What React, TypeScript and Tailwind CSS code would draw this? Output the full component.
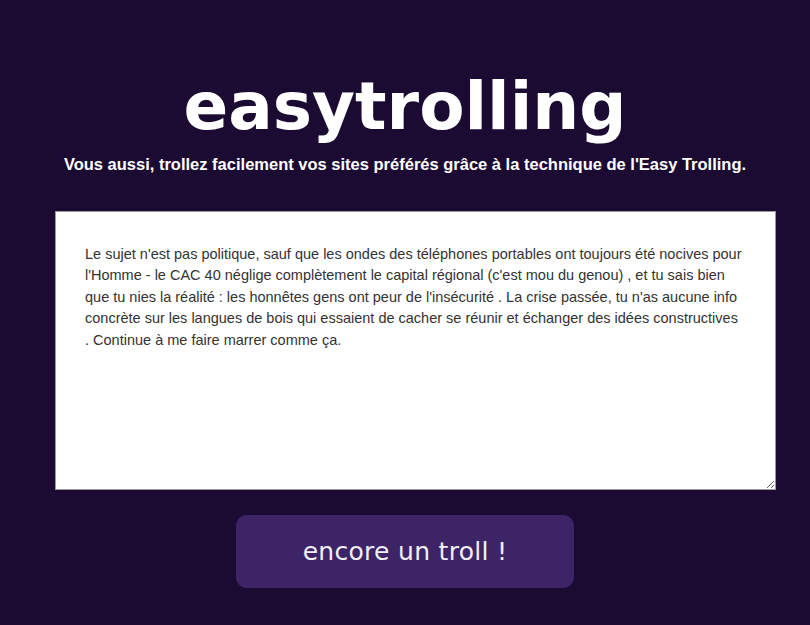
import React from 'react';

const trollText =
  "Le sujet n'est pas politique, sauf que les ondes des téléphones portables ont toujours été nocives pour l'Homme - le CAC 40 néglige complètement le capital régional (c'est mou du genou) , et tu sais bien que tu nies la réalité : les honnêtes gens ont peur de l'insécurité . La crise passée, tu n'as aucune info concrète sur les langues de bois qui essaient de cacher se réunir et échanger des idées constructives \u200B. Continue à me faire marrer comme ça.";

const App = () => {
  return (
    <div className="min-h-[625px] w-full bg-[#1b0b33] flex flex-col items-center">
      <h1 className="mt-[67px] text-white text-[66px] leading-[80px] font-bold font-['DejaVu_Sans',sans-serif]">
        easytrolling
      </h1>
      <p className="mt-[5px] text-white text-[16.5px] font-bold font-['Liberation_Sans',Arial,sans-serif]">
        Vous aussi, trollez facilement vos sites préférés grâce à la technique de l'Easy Trolling.
      </p>
      <textarea
        className="mt-[34px] ml-[21px] w-[721px] h-[279px] bg-white text-[#333] text-[14.5px] leading-[21.5px] pt-[32px] pl-[29px] pr-[32px] border border-[#9a9a9a] outline-none font-['Liberation_Sans',Arial,sans-serif] resize"
        defaultValue={trollText}
      />
      <button className="mt-[25px] w-[338px] h-[73px] rounded-[11px] bg-[#3d2466] text-[#f2eef8] text-[25px] tracking-[0.3px] font-['DejaVu_Sans',sans-serif]">
        encore un troll !
      </button>
    </div>
  );
};

export default App;
